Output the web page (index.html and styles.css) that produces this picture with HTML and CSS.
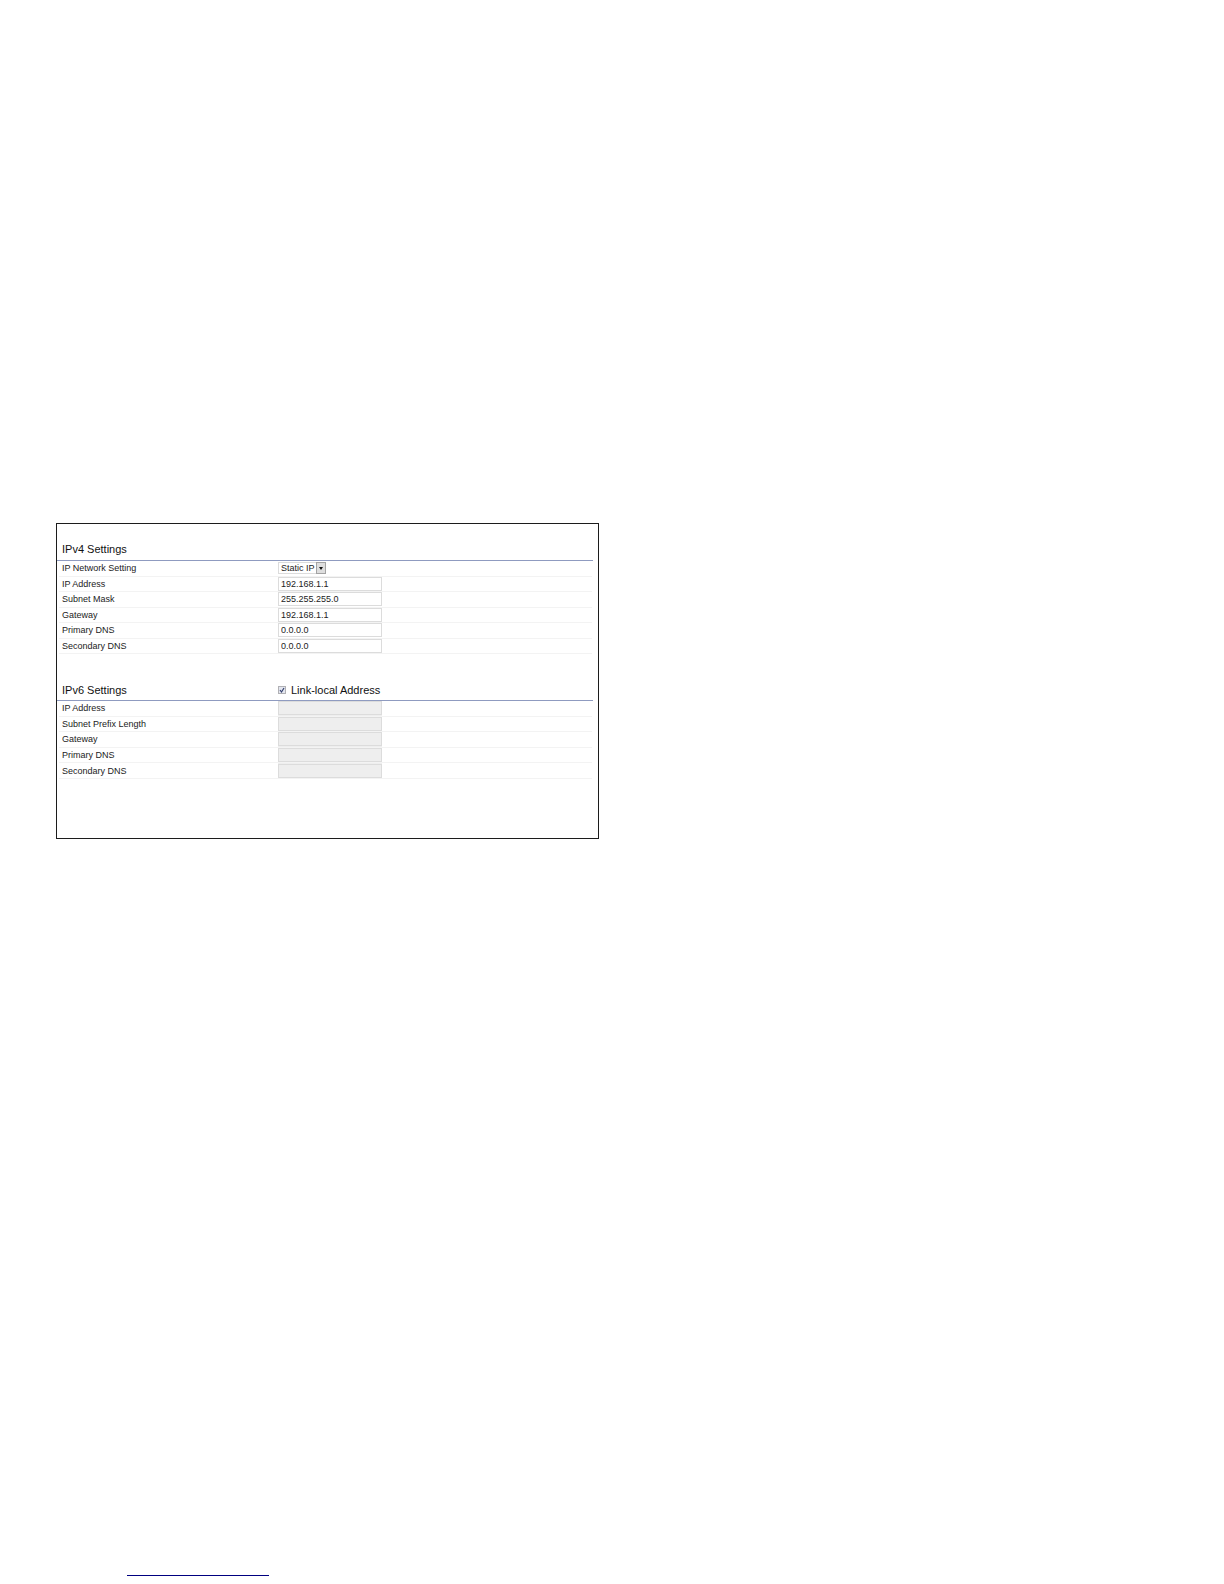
FILE: index.html
```html
<!DOCTYPE html>
<html lang="en">
<head>
<meta charset="utf-8">
<title>IP Settings</title>
<link rel="stylesheet" href="styles.css">
</head>
<body>
<main>
<form class="panel">
  <section>
    <header class="head"><h2>IPv4 Settings</h2></header>
    <div class="rows rows-v4">
      <div class="row"><label for="mode">IP Network Setting</label>
        <span class="select"><select id="mode"><option>Static IP</option></select><svg class="drop" viewBox="0 0 10 12" aria-hidden="true"><rect x=".5" y=".5" width="9" height="11" fill="#dedede" stroke="#a3a3a3"/><path d="M3 5h4L5 8z" fill="#111"/></svg></span></div>
      <div class="row"><label for="ip4">IP Address</label><input class="field" id="ip4" value="192.168.1.1"></div>
      <div class="row"><label for="mask">Subnet Mask</label><input class="field" id="mask" value="255.255.255.0"></div>
      <div class="row"><label for="gw4">Gateway</label><input class="field" id="gw4" value="192.168.1.1"></div>
      <div class="row"><label for="p4">Primary DNS</label><input class="field" id="p4" value="0.0.0.0"></div>
      <div class="row"><label for="s4">Secondary DNS</label><input class="field" id="s4" value="0.0.0.0"></div>
    </div>
  </section>
  <section>
    <header class="head head-v6"><h2>IPv6 Settings</h2>
      <label class="check"><span class="tick"><input type="checkbox" checked><svg viewBox="0 0 8 8" aria-hidden="true"><path d="M2 4l1.5 2L6 2" fill="none" stroke="#34406e" stroke-width="1.2"/></svg></span>Link-local Address</label></header>
    <div class="rows rows-v6">
      <div class="row"><label for="ip6">IP Address</label><input class="field" id="ip6" disabled></div>
      <div class="row"><label for="prefix">Subnet Prefix Length</label><input class="field" id="prefix" disabled></div>
      <div class="row"><label for="gw6">Gateway</label><input class="field" id="gw6" disabled></div>
      <div class="row"><label for="p6">Primary DNS</label><input class="field" id="p6" disabled></div>
      <div class="row"><label for="s6">Secondary DNS</label><input class="field" id="s6" disabled></div>
    </div>
  </section>
</form>
</main>
<footer><a class="rule" href="#" aria-label="Top"></a></footer>
</body>
</html>
```
FILE: styles.css
```css
* { box-sizing: border-box; }
body {
  margin: 0;
  min-height: 100vh;
  display: flex;
  flex-direction: column;
  background: #fff;
  color: #222;
  font: 9px/14px "Liberation Sans", Arial, sans-serif;
}
main { flex: 1; padding: 523px 56px 24px; }
.panel {
  max-width: 543px;
  padding: 0 5px 59px 0;
  border: 1px solid #1c1c1c;
}
.head, .row {
  display: grid;
  grid-template-columns: 216px 1fr;
  align-items: center;
}
.head {
  height: 37px;
  padding: 14px 0 0 5px;
  border-bottom: 1px solid #8f9bc0;
  color: #111;
  font-size: 11px;
}
.head-v6 { height: 47px; padding-top: 26px; }
.head h2 { margin: 0; font-size: inherit; font-weight: normal; }
.rows { display: grid; grid-auto-rows: 1fr; padding-right: 1px; }
.rows-v4 { height: 93px; }
.rows-v6 { height: 78px; }
.row {
  margin-left: 2px;
  padding-left: 3px;
  border-bottom: 1px solid #f3f3f3;
}
.field {
  width: 104px;
  height: 14px;
  padding: 0 2px;
  border: 1px solid #dcdcdc;
  border-radius: 0;
  background: #fff;
  color: #222;
  font: inherit;
}
.field:disabled { background: #eee; }
.row:has(.field:disabled) {
  background: linear-gradient(#eee, #eee) 219px 0 / 104px 100% no-repeat;
}
.select { display: flex; width: 48px; height: 12px; }
.select select {
  appearance: none;
  width: 38px;
  padding: 0 0 0 2px;
  border: 1px solid #dcdcdc;
  border-right: 0;
  border-radius: 0;
  background: #fff;
  color: #222;
  font: inherit;
  line-height: 10px;
}
.drop { width: 10px; height: 12px; }
.check { display: flex; align-items: center; gap: 5px; }
.tick { display: grid; width: 8px; height: 8px; }
.tick input, .tick svg { grid-area: 1 / 1; width: 8px; height: 8px; margin: 0; }
.tick input { appearance: none; border: 1px solid #b0b0b4; background: #e3e6ef; }
.tick svg { pointer-events: none; }
footer { padding: 0 127px 8px; }
.rule { display: block; max-width: 142px; border-bottom: 1px solid #000080; }
```
